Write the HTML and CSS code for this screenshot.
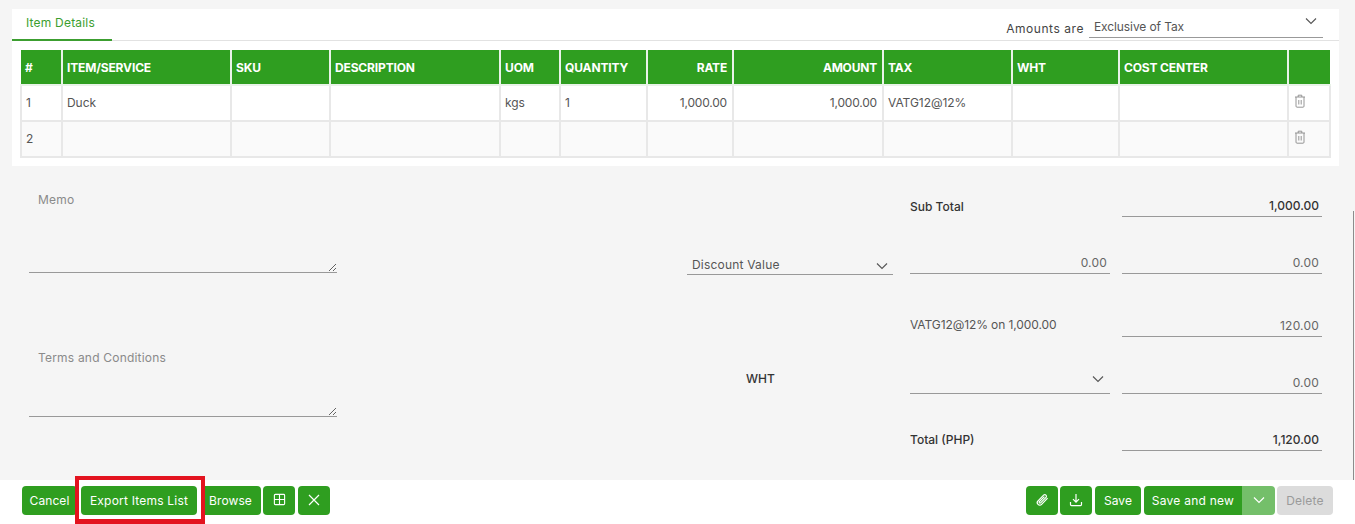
FILE: index.html
```html
<!DOCTYPE html>
<html lang="en">
<head>
<meta charset="utf-8">
<title>Item Details</title>
<link rel="stylesheet" href="styles.css">
</head>
<body>
<main class="page">
  <section class="card">
    <div class="tabbar">
      <div class="tab">Item Details</div>
      <div class="amounts">
        <span class="amounts-label">Amounts are</span>
        <div class="select amounts-select"><span>Exclusive of Tax</span>
          <svg class="chev" viewBox="0 0 12 8"><path d="M1 1.5l5 5 5-5"/></svg></div>
      </div>
    </div>
    <table class="items">
      <colgroup>
        <col class="c1"><col class="c2"><col class="c3"><col class="c4"><col class="c5"><col class="c6"><col class="c7"><col class="c8"><col class="c9"><col class="c10"><col class="c11"><col class="c12">
      </colgroup>
      <thead>
        <tr><th>#</th><th>ITEM/SERVICE</th><th>SKU</th><th>DESCRIPTION</th><th>UOM</th><th>QUANTITY</th><th class="num">RATE</th><th class="num">AMOUNT</th><th>TAX</th><th>WHT</th><th>COST CENTER</th><th></th></tr>
      </thead>
      <tbody>
        <tr><td>1</td><td>Duck</td><td></td><td></td><td>kgs</td><td>1</td><td class="num">1,000.00</td><td class="num">1,000.00</td><td>VATG12@12%</td><td></td><td></td>
          <td class="act"><svg class="trash" viewBox="0 0 12 14"><path d="M1 3h10M4.2 3V1.2h3.6V3M2 3v9.2q0 1 1 1h6q1 0 1-1V3M4.8 6v4.5M7.2 6v4.5"/></svg></td></tr>
        <tr class="alt"><td>2</td><td></td><td></td><td></td><td></td><td></td><td></td><td></td><td></td><td></td><td></td>
          <td class="act"><svg class="trash" viewBox="0 0 12 14"><path d="M1 3h10M4.2 3V1.2h3.6V3M2 3v9.2q0 1 1 1h6q1 0 1-1V3M4.8 6v4.5M7.2 6v4.5"/></svg></td></tr>
      </tbody>
    </table>
  </section>

  <section class="form">
    <div class="notes">
      <textarea class="note memo" placeholder="Memo"></textarea>
      <textarea class="note terms" placeholder="Terms and Conditions"></textarea>
    </div>
    <div class="summary">
      <div class="label strong span2">Sub Total</div>
      <div class="field strong">1,000.00</div>

      <div class="select discount"><span>Discount Value</span>
        <svg class="chev" viewBox="0 0 12 8"><path d="M1 1.5l5 5 5-5"/></svg></div>
      <div class="field mid">0.00</div>
      <div class="field">0.00</div>

      <div class="label tax span2">VATG12@12% on 1,000.00</div>
      <div class="field">120.00</div>

      <div class="label strong wht">WHT</div>
      <div class="select wht-select"><span></span>
        <svg class="chev" viewBox="0 0 12 8"><path d="M1 1.5l5 5 5-5"/></svg></div>
      <div class="field">0.00</div>

      <div class="label strong span2 total">Total (PHP)</div>
      <div class="field strong">1,120.00</div>
    </div>
  </section>

  <footer class="actions">
    <div class="group">
      <button class="btn cancel">Cancel</button>
      <span class="highlight"><button class="btn export">Export Items List</button></span>
      <button class="btn browse">Browse</button>
      <button class="btn icon"><svg class="grid" viewBox="0 0 14 14"><path d="M2.5 1.5h9q1 0 1 1v9q0 1-1 1h-9q-1 0-1-1v-9q0-1 1-1zM1.5 7h11M7 1.5v11"/></svg></button>
      <button class="btn icon"><svg viewBox="0 0 14 14"><path d="M2 2l10 10M12 2L2 12"/></svg></button>
    </div>
    <div class="group right">
      <button class="btn icon"><svg viewBox="0 0 14 14"><path d="M12.6 5.2L6.6 11.3a2.5 2.5 0 0 1-3.6-3.5l5.8-5.9a1.7 1.7 0 0 1 2.4 2.3L5.6 9.8a.8.8 0 0 1-1.2-1.1L9.4 3.6"/></svg></button>
      <button class="btn icon"><svg viewBox="0 0 14 14"><path d="M7 1v8M4 6.2L7 9.2l3-3M1.5 9v2.6q0 1 1 1h9q1 0 1-1V9"/></svg></button>
      <button class="btn save">Save</button>
      <div class="split">
        <button class="btn savenew">Save and new</button>
        <button class="btn caret"><svg viewBox="0 0 12 8"><path d="M1 1.5l5 5 5-5"/></svg></button>
      </div>
      <button class="btn delete">Delete</button>
    </div>
  </footer>
  <div class="scroll-edge"></div>
</main>
</body>
</html>
```

FILE: styles.css
```css
* { box-sizing: border-box; }
html, body { margin: 0; height: 100%; }
body {
  background: #f5f5f5;
  font-family: Inter, "Open Sans", "Liberation Sans", sans-serif;
  font-size: 12px;
  font-weight: 400;
  letter-spacing: 0.2px;
  color: #4a4a4a;
  overflow: hidden;
}
.page { position: relative; width: 1355px; height: 524px; padding-top: 9px; }

.card { margin: 0 16px 0 12px; height: 157px; background: #fff; }
.tabbar { display: flex; justify-content: space-between; height: 32px; border-bottom: 1px solid #e2e2e2; }
.tab {
  width: 100px; height: 32px; padding: 6px 0 0 14px;
  color: #3c9e30; border-bottom: 2px solid #3c9e30;
}
.amounts { display: flex; align-items: flex-start; padding-right: 16px; }
.amounts-label { margin: 12px 5px 0 0; color: #444; letter-spacing: 0.55px; }
.select { position: relative; display: flex; align-items: center; border-bottom: 1px solid #999; color: #555; }
.amounts-select { width: 234px; height: 29px; padding: 6px 0 0 5px; letter-spacing: -0.1px; }
.chev { position: absolute; width: 12px; height: 8px; fill: none; stroke: #555; stroke-width: 1.1; }
.amounts-select .chev { right: 6px; top: 8px; }

.items { table-layout: fixed; border-collapse: collapse; width: 1309px; margin: 9px 0 0 8px; }
.c1 { width: 41px; } .c2 { width: 169px; } .c3 { width: 99px; } .c4 { width: 170px; }
.c5 { width: 60px; } .c6 { width: 87px; } .c7 { width: 86px; } .c8 { width: 150px; }
.c9 { width: 129px; } .c10 { width: 107px; } .c11 { width: 169px; } .c12 { width: 42px; }
.items th {
  height: 35px; padding: 0 5px 0 4px; text-align: left;
  background: #2f9e20; color: #fff;
  font-weight: 700; font-size: 12px; letter-spacing: -0.15px;
  border: 2px solid #e9f3e8; border-top: 0;
}
.items th:first-child { border-left: 0; }
.items th:last-child { border-right: 0; }
.items td { height: 36px; padding: 0 5px 2px 4px; border: 2px solid #e8e8e8; color: #555; letter-spacing: -0.05px; }
.items .num { text-align: right; letter-spacing: -0.2px; }
.items .alt td { background: #fafafa; }
.items td.act { padding: 0 0 4px 5px; }
.trash { display: block; width: 12px; height: 14px; fill: none; stroke: #8a8a8a; stroke-width: 0.9; }

.form { display: flex; height: 305px; padding: 0 33px 0 29px; justify-content: space-between; }
.notes { display: flex; flex-direction: column; width: 308px; padding-top: 24px; }
.note {
  display: block; width: 308px; padding: 2px 9px; background: transparent;
  border: 0; border-bottom: 1px solid #999; outline: 0;
  font: inherit; letter-spacing: inherit; color: #444;
}
.note::placeholder { color: #8a8a8a; opacity: 1; }
.memo { height: 83px; }
.terms { height: 69px; margin-top: 75px; }

.summary {
  display: grid;
  grid-template-columns: 223px 212px 200px;
  grid-template-rows: 51px 57px 63px 57px 57px;
  width: 635px;
}
.summary > * { align-self: end; }
.span2 { grid-column: 1 / span 2; padding-left: 223px; }
.label { padding-bottom: 3px; }
.summary .label { color: #555; }
.summary .strong { font-weight: 500; color: #333; letter-spacing: 0; }
.summary .tax { padding-bottom: 5px; letter-spacing: -0.1px; }
.summary .wht { padding: 0 0 8px 59px; }
.summary .total { padding-bottom: 4px; }
.field { height: 24px; padding: 0 3px 3px 0; display: flex; align-items: flex-end; justify-content: flex-end; border-bottom: 1px solid #999; color: #666; }
.mid { width: 200px; }
.discount { height: 24px; padding: 4px 0 0 5px; width: 206px; margin-bottom: -1px; }
.discount .chev { right: 5px; top: 11px; }
.wht-select { height: 24px; width: 200px; }
.wht-select .chev { right: 6px; top: 5px; }

.actions {
  position: absolute; left: 0; right: 0; top: 480px; height: 44px;
  display: flex; justify-content: space-between;
  padding: 6px 22px 0; background: #fff;
}
.group { display: flex; align-items: flex-start; }
.btn {
  height: 29px; padding: 0 0 1px; border: 0; border-radius: 4px;
  background: #2f9e20; color: #fff;
  font: inherit; letter-spacing: 0.1px; font-size: 12px;
  display: flex; align-items: center; justify-content: center;
}
.btn svg { fill: none; stroke: #fff; stroke-width: 1.2; width: 14px; height: 14px; }
.btn svg.grid { width: 13px; height: 13px; margin-bottom: 2px; }
.cancel { width: 55px; }
.highlight { position: relative; display: block; margin: 0 0 0 4px; }
.highlight::after {
  content: ""; position: absolute; left: -6px; right: -8px; top: -10px; bottom: -9px;
  border: 4px solid #e3141f; border-bottom-width: 5px; pointer-events: none;
}
.export { width: 116px; letter-spacing: 0.2px; }
.browse { width: 57px; margin-left: 7px; padding-right: 4px; border-radius: 0 4px 4px 0; }
.icon { width: 32px; }
.browse + .icon { margin-left: 2px; }
.icon + .icon { margin-left: 3px; }
.right .icon + .icon { margin-left: 2px; }
.save { width: 46px; margin-left: 3px; }
.split { display: flex; margin-left: 3px; }
.savenew { width: 98px; border-radius: 4px 0 0 4px; letter-spacing: 0.25px; }
.caret { width: 33px; background: #74bf6a; border-radius: 0 4px 4px 0; }
.btn.caret svg { width: 12px; height: 8px; }
.delete { width: 56px; margin-left: 2px; background: #dcdcdc; color: #9a9a9a; letter-spacing: 0.2px; }

.scroll-edge { position: absolute; left: 1353px; top: 211px; width: 1px; height: 269px; background: #8c8c8c; }
```
